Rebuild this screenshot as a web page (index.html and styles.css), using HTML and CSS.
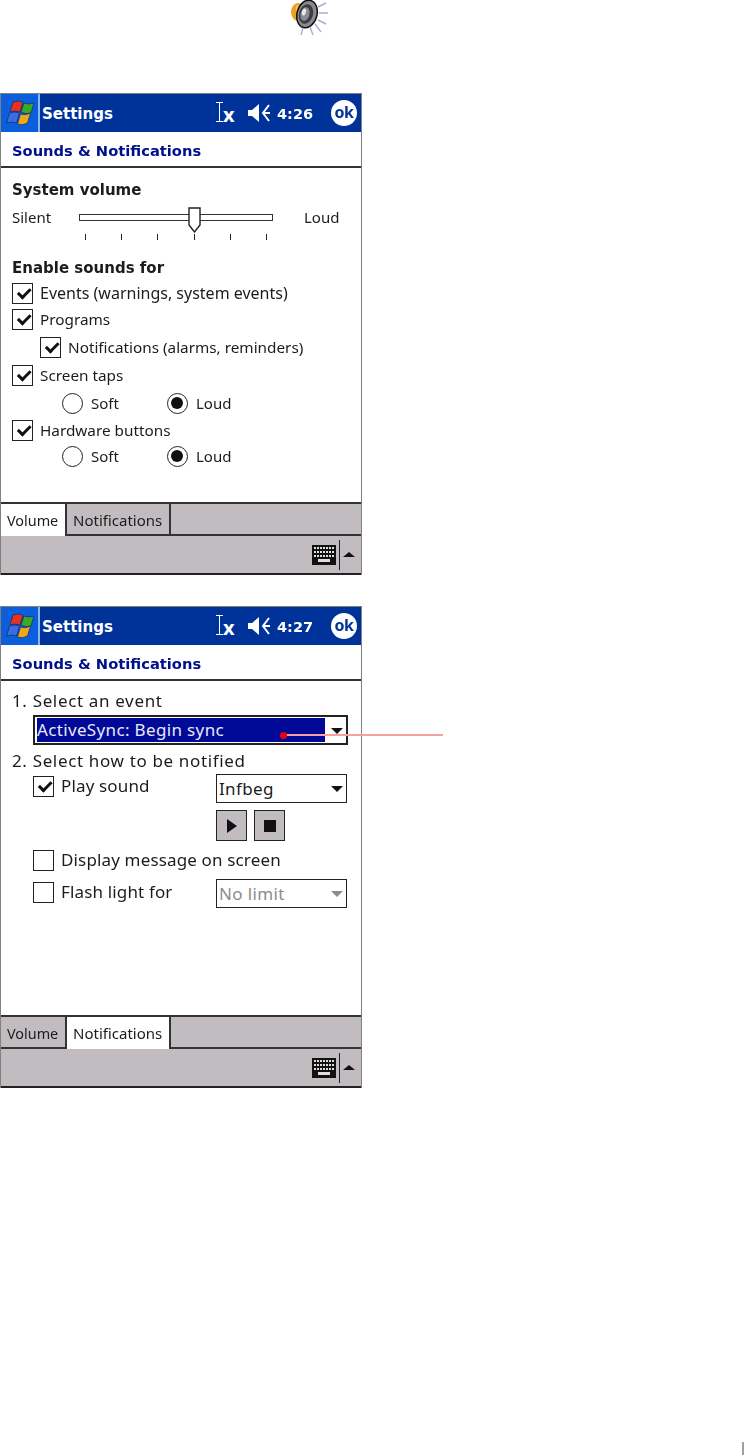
FILE: index.html
```html
<!DOCTYPE html>
<html lang="en">
<head>
  <meta charset="UTF-8">
  <title>Sounds &amp; Notifications</title>
  <link rel="stylesheet" href="styles.css">
</head>
<body>

<!-- speaker icon above the screenshots -->
<div class="page-icon">
  <svg width="40" height="37" viewBox="0 0 40 37">
    <ellipse cx="8" cy="12" rx="7" ry="9" fill="#f0a020"/>
    <ellipse cx="9" cy="9" rx="3" ry="4" fill="#ffd060"/>
    <ellipse cx="17" cy="14" rx="10" ry="14" transform="rotate(15 17 14)" fill="#8a8a8e" stroke="#111" stroke-width="1.5"/>
    <ellipse cx="16" cy="14" rx="7" ry="10" transform="rotate(15 16 14)" fill="#3c3c42"/>
    <ellipse cx="15" cy="14" rx="4.500" ry="7" transform="rotate(15 15 14)" fill="#8c8c96"/>
    <ellipse cx="14" cy="12" rx="2" ry="3.500" transform="rotate(15 14 12)" fill="#e8e8ee"/>
    <g stroke="#a8acd8" stroke-width="1.4" fill="none">
      <path d="M28 7l8-4M29 13h9M28 20l8 4M25 24l6 8M20 27l3 8M13 28l-2 7"/>
    </g>
  </svg>
</div>

<!-- ===== volume tab ===== -->
<div class="screen first">
  <div class="titlebar">
    <div class="start">
      <svg width="32" height="27" viewBox="0 0 32 27">
        <path d="M9 2q5-2 10 0l-3 10q-5-2-10 0z" fill="#e8321c" stroke="#0a2a70" stroke-width=".7"/>
        <path d="M20 3q5 2 10 0l-3 10q-5 2-10-1z" fill="#3ca828" stroke="#0a2a70" stroke-width=".7"/>
        <path d="M5.500 13q5-2 10 0l-3 10q-5-2-10 0z" fill="#3a6ee0" stroke="#0a2a70" stroke-width=".7"/>
        <path d="M16.500 14q5 2 10-1l-3 10q-5 3-10 1z" fill="#f0a818" stroke="#0a2a70" stroke-width=".7"/>
      </svg>
    </div>
    <span class="app-name">Settings</span>
    <div class="tray">
      <span class="ibeam"></span><span class="tray-x">x</span>
      <svg class="mute" width="24" height="20" viewBox="0 0 24 20">
        <path d="M1 7h4l7-6v18l-7-6H1z" fill="#fff"/>
        <path d="M22 2l-6 8 6 8M16 10h7" stroke="#fff" stroke-width="2" fill="none"/>
      </svg>
      <span class="clock">4:26</span>
      <span class="ok">ok</span>
    </div>
  </div>
  <div class="heading">Sounds &amp; Notifications</div>
  <div class="content vol">
    <div class="section">System volume</div>
    <div class="slider-row">
      <span class="slider-label">Silent</span>
      <div class="slider">
        <div class="track"></div>
        <svg class="thumb" width="13" height="26" viewBox="0 0 13 26">
          <path d="M1 1h11v17l-5.500 7-5.500-7z" fill="#fff" stroke="#222" stroke-width="1.400"/>
        </svg>
        <div class="ticks"><i></i><i></i><i></i><i></i><i></i><i></i></div>
      </div>
      <span class="slider-end">Loud</span>
    </div>
    <div class="section enable">Enable sounds for</div>
    <div class="opt wide"><span class="box on"></span>Events (warnings, system events)</div>
    <div class="opt m2"><span class="box on"></span>Programs</div>
    <div class="opt m4 sub"><span class="box on"></span>Notifications (alarms, reminders)</div>
    <div class="opt m4"><span class="box on"></span>Screen taps</div>
    <div class="radios m4"><span class="radio"></span><span class="r-text">Soft</span><span class="radio sel"></span><span>Loud</span></div>
    <div class="opt m3"><span class="box on"></span>Hardware buttons</div>
    <div class="radios m2"><span class="radio"></span><span class="r-text">Soft</span><span class="radio sel"></span><span>Loud</span></div>
  </div>
  <div class="tabs">
    <span class="tab active">Volume</span>
    <span class="tab">Notifications</span>
  </div>
  <div class="cmdbar">
    <svg width="24" height="20" viewBox="0 0 24 20">
      <rect width="24" height="20" fill="#111"/>
      <path d="M2 3h20M2 7h20M2 11h20" stroke="#ddd" stroke-width="2" stroke-dasharray="2 1"/>
      <rect x="6" y="14" width="12" height="3" fill="#ddd"/>
    </svg>
    <span class="sep"></span>
    <span class="sip-up"></span>
  </div>
</div>

<!-- ===== notifications tab ===== -->
<div class="screen second">
  <div class="titlebar">
    <div class="start">
      <svg width="32" height="27" viewBox="0 0 32 27">
        <path d="M9 2q5-2 10 0l-3 10q-5-2-10 0z" fill="#e8321c" stroke="#0a2a70" stroke-width=".7"/>
        <path d="M20 3q5 2 10 0l-3 10q-5 2-10-1z" fill="#3ca828" stroke="#0a2a70" stroke-width=".7"/>
        <path d="M5.500 13q5-2 10 0l-3 10q-5-2-10 0z" fill="#3a6ee0" stroke="#0a2a70" stroke-width=".7"/>
        <path d="M16.500 14q5 2 10-1l-3 10q-5 3-10 1z" fill="#f0a818" stroke="#0a2a70" stroke-width=".7"/>
      </svg>
    </div>
    <span class="app-name">Settings</span>
    <div class="tray">
      <span class="ibeam"></span><span class="tray-x">x</span>
      <svg class="mute" width="24" height="20" viewBox="0 0 24 20">
        <path d="M1 7h4l7-6v18l-7-6H1z" fill="#fff"/>
        <path d="M22 2l-6 8 6 8M16 10h7" stroke="#fff" stroke-width="2" fill="none"/>
      </svg>
      <span class="clock">4:27</span>
      <span class="ok">ok</span>
    </div>
  </div>
  <div class="heading">Sounds &amp; Notifications</div>
  <div class="content notif">
    <div class="line">1. Select an event</div>
    <div class="combo event"><span class="combo-sel">ActiveSync: Begin sync</span><span class="arrow"></span></div>
    <div class="line second-step">2. Select how to be notified</div>
    <div class="form-row play">
      <div class="opt in-form"><span class="box on"></span>Play sound</div>
      <div class="combo small"><span class="combo-text">Infbeg</span><span class="arrow"></span></div>
    </div>
    <div class="buttons">
      <span class="sq"><span class="tri"></span></span>
      <span class="sq"><span class="stop"></span></span>
    </div>
    <div class="opt in-form display"><span class="box"></span>Display message on screen</div>
    <div class="form-row flash">
      <div class="opt in-form"><span class="box"></span>Flash light for</div>
      <div class="combo small off"><span class="combo-text">No limit</span><span class="arrow"></span></div>
    </div>
  </div>
  <div class="tabs">
    <span class="tab">Volume</span>
    <span class="tab active">Notifications</span>
  </div>
  <div class="cmdbar">
    <svg width="24" height="20" viewBox="0 0 24 20">
      <rect width="24" height="20" fill="#111"/>
      <path d="M2 3h20M2 7h20M2 11h20" stroke="#ddd" stroke-width="2" stroke-dasharray="2 1"/>
      <rect x="6" y="14" width="12" height="3" fill="#ddd"/>
    </svg>
    <span class="sep"></span>
    <span class="sip-up"></span>
  </div>
  <!-- callout over the event list -->
  <div class="callout"></div>
</div>

<div class="edge-mark"></div>

</body>
</html>
```

FILE: styles.css
```css
:root{
  --c-blue:#003399; --c-start:#0c5fdc; --c-navy:#000f8c; --c-grey:#c0bcc0;
  --c-ink:#1c1c1c; --c-line:#2a2a2a;
  --bold:"DejaVu Sans","Noto Sans",sans-serif;
}
html,body{height:100%}
body{
  margin:0;background:#fff;color:var(--c-ink);
  font-family:"Noto Sans","Liberation Sans",sans-serif;font-size:15px;line-height:20px;
  position:relative;overflow:hidden
}
.page-icon{height:37px;padding-left:290px}
.page-icon svg{display:block}

.screen{
  position:relative;box-sizing:border-box;width:362px;height:482px;
  border:solid #808080;border-width:1px 1px 0 1px;
  display:flex;flex-direction:column;filter:blur(.3px)
}
.first{margin-top:56px}
.second{margin-top:31px}

/* title bar */
.titlebar{height:38px;background:var(--c-blue);display:flex;align-items:center;color:#fff;flex:none}
.start{
  width:37px;height:38px;background:var(--c-start);border-right:2px solid #8fb4ee;
  display:flex;align-items:center;justify-content:center;flex:none
}
.app-name{font-family:var(--bold);font-weight:700;margin:2px 0 0 2px;font-size:15px}
.tray{margin-left:auto;display:flex;align-items:center;padding-right:4px}
.ibeam{width:1px;height:20px;background:#fff;position:relative;margin-top:-2px}
.ibeam:before,.ibeam:after{content:"";position:absolute;left:-3px;width:7px;height:1px;background:#fff}
.ibeam:before{top:0}
.ibeam:after{bottom:0}
.tray-x{font-weight:700;font-size:20px;margin:4px 0 0 3px;width:15px}
.mute{margin-left:9px}
.clock{font-family:var(--bold);font-weight:700;font-size:14.500px;margin:2px 0 0 6px;width:44px}
.ok{
  width:26px;height:26px;border-radius:50%;background:#fff;color:var(--c-blue);
  font-weight:700;font-size:16px;line-height:25px;text-align:center;margin-left:10px;letter-spacing:-.5px
}

.heading{
  height:36px;flex:none;box-sizing:border-box;border-bottom:2px solid #333;
  padding:9px 0 0 11px;color:var(--c-navy);font-family:var(--bold);font-weight:700;font-size:14.700px
}

.content{flex:none;height:334px;box-sizing:border-box;padding-left:11px}
.section{font-family:var(--bold);font-weight:700;font-size:15px;height:24px;line-height:24px}
.vol{padding-top:10px}
.enable{margin-top:11px}

/* slider */
.slider-row{display:flex;height:44px;align-items:flex-start;margin-top:-1px}
.slider-label{width:67px;line-height:32px}
.slider-end{margin-left:31px;line-height:32px}
.slider{position:relative;width:194px;padding-top:13px}
.track{height:7px;box-sizing:border-box;border:1.500px solid #333;background:#fff}
.thumb{position:absolute;left:109px;top:6px}
.ticks{display:flex;justify-content:space-between;padding:13px 6px 0}
.ticks i{display:block;width:1px;height:6px;background:#222}

/* checks and radios */
.opt{display:flex;align-items:center;height:24px;gap:7px}
.vol .opt{font-size:15.300px}
.vol .wide{font-size:16px;margin-top:1px}
.sub{padding-left:28px}
.m2{margin-top:2px}
.m3{margin-top:3px}
.m4{margin-top:4px}
.box{
  width:21px;height:21px;box-sizing:border-box;border:1.500px solid #222;background:#fff;
  position:relative;flex:none
}
.box.on:after{
  content:"";position:absolute;left:4px;top:2px;box-sizing:border-box;height:8px;width:13px;
  border:solid #111;border-width:0 0 3px 3px;transform:rotate(-45deg) translate(-1px,2px)
}
.radios{display:flex;align-items:center;height:24px;padding-left:50px}
.radio{
  width:21px;height:21px;box-sizing:border-box;border:1.500px solid #222;border-radius:50%;
  background:#fff;position:relative;flex:none;margin-right:8px
}
.radio.sel:after{
  content:"";position:absolute;left:3px;top:3px;width:12px;height:12px;border-radius:50%;background:#111
}
.r-text{width:76px}

/* bottom tabs and bar */
.tabs{
  height:34px;flex:none;box-sizing:border-box;background:var(--c-grey);
  border-top:2px solid #333;border-bottom:2px solid #333;display:flex
}
.tab{
  line-height:33px;border-right:2px solid #333;font-size:15px;height:30px
}
.tab:first-child{width:58px;padding:0 0 0 6px;font-size:14.400px}
.tab:nth-child(2){width:89px;padding:0 7px 0 6px}
.tab.active{background:#fff;height:32px}
.cmdbar{
  flex:1;background:var(--c-grey);border-bottom:2px solid #222;
  display:flex;align-items:center;justify-content:flex-end;padding-right:6px
}
.sep{width:1.500px;height:30px;background:#222;margin:0 3px}
.sip-up{
  width:0;height:0;border:solid transparent;border-width:0 6px 5px;border-bottom-color:#111
}

/* notifications tab */
.notif{padding-top:7px;font-size:17px;letter-spacing:.15px}
.line{height:26px;line-height:26px;letter-spacing:.65px}
.combo{
  box-sizing:border-box;border:2px solid #222;background:#fff;display:flex;align-items:center;
  position:relative;height:30px;letter-spacing:.35px
}
.event{margin:1px 0 0 21px;width:315px;padding:1px}
.combo-sel{
  background:#000a96;color:#e8e8f8;width:288px;height:24px;line-height:23px;margin-left:1px;
  box-sizing:border-box;flex:none
}
.arrow{
  width:0;height:0;border:solid transparent;border-width:6px 6px 0;border-top-color:#111;
  position:absolute;right:3px;top:11px
}
.second-step{margin-top:3px}
.form-row{display:flex;align-items:flex-start;padding-left:21px}
.in-form{width:183px}
.small{width:131px;height:29px;border-width:1.500px}
.combo-text{padding-left:2px}
.off{color:#8c8c8c}
.off .arrow{border-top-color:#8c8c8c}
.buttons{display:flex;gap:7px;padding-left:204px;margin-top:7px}
.sq{
  width:31px;height:31px;box-sizing:border-box;border:1.500px solid #222;background:var(--c-grey);
  display:flex;align-items:center;justify-content:center
}
.tri{width:0;height:0;border:solid transparent;border-width:7.500px 0 7.500px 10px;border-left-color:#111}
.stop{width:12px;height:12px;background:#111}
.notif .display{margin:7px 0 0 21px;width:auto}
.flash{margin-top:7px}
.flash .opt{margin-top:1px}

.callout{
  position:absolute;left:282px;top:127px;width:160px;height:2px;background:#f6a0a0
}
.callout:before{
  content:"";position:absolute;left:-3px;top:-2px;width:7px;height:7px;border-radius:50%;background:#e8000c
}
.edge-mark{position:absolute;right:0;bottom:0;width:2px;height:13px;background:#a0a0a0}
```
